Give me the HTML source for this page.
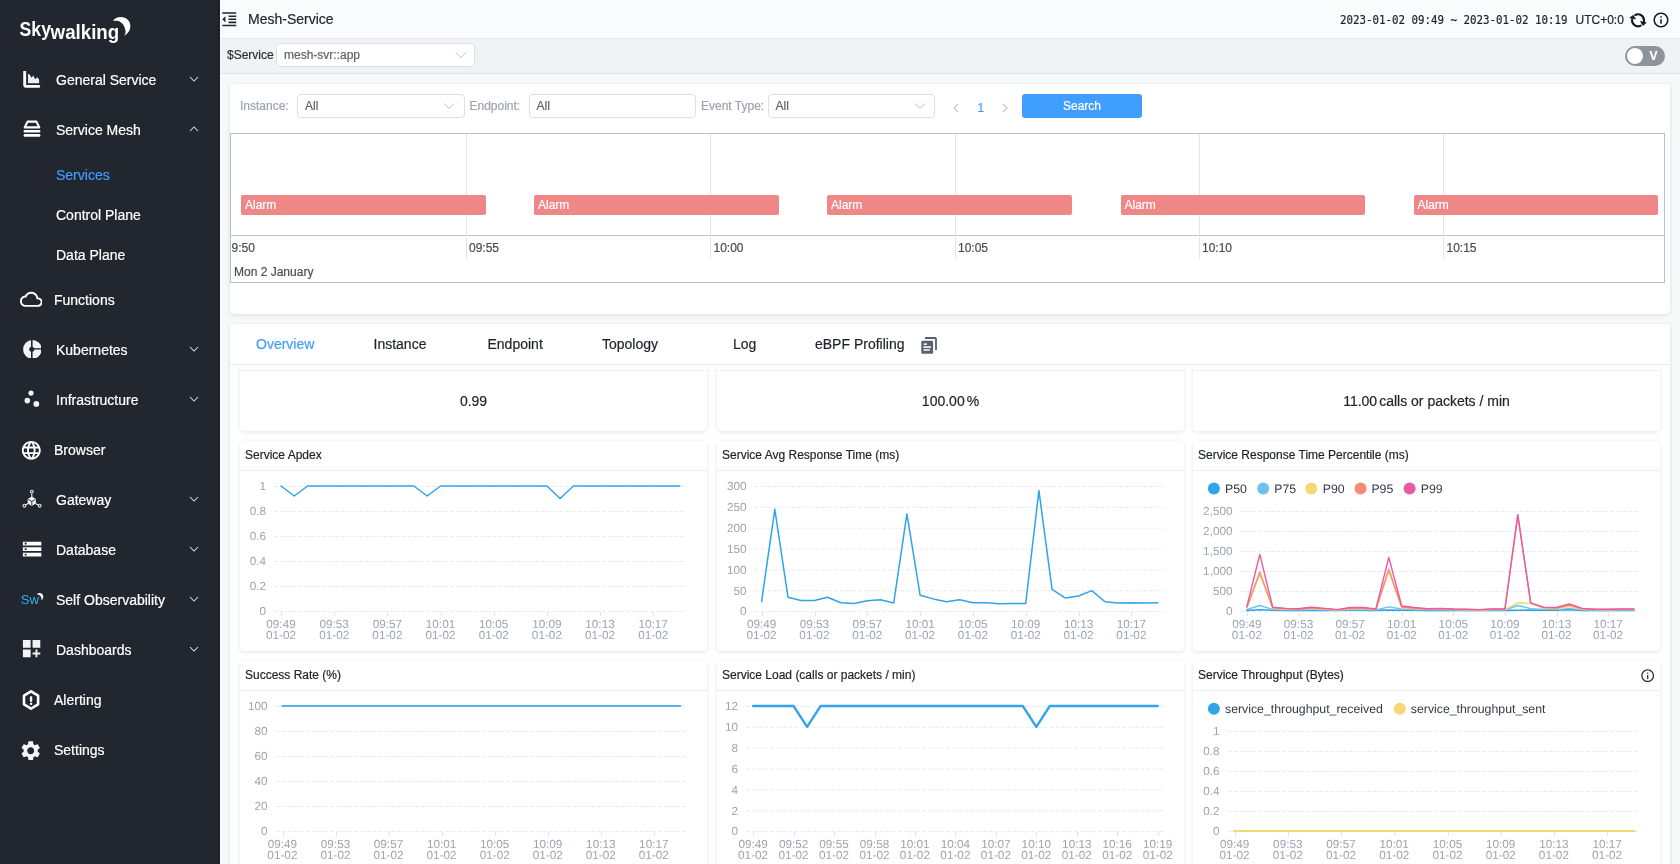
<!DOCTYPE html>
<html lang="en"><head><meta charset="utf-8"><title>Mesh-Service - SkyWalking</title>
<style>
*{box-sizing:border-box;margin:0;padding:0}
html,body{width:1680px;height:864px;overflow:hidden;background:#f7f8fa;
  font-family:"Liberation Sans",sans-serif;font-size:12px;color:#3d444f;
  -webkit-font-smoothing:antialiased;-webkit-text-stroke:0.2px}
.abs{position:absolute}
#app{position:relative;width:1680px;height:864px;overflow:hidden;will-change:transform}
#side{position:absolute;left:0;top:0;width:220px;height:864px;background:#22262e;color:#fff;
  }
#side:after{content:'';position:absolute;left:217.8px;top:0;width:1.6px;height:864px;background:repeating-linear-gradient(to bottom,transparent 0,transparent 1.2px,#11141a 1.2px,#11141a 2.8px,transparent 2.8px,transparent 4px)}
.mi{position:absolute;left:0;width:220px;height:50px;line-height:50px;font-size:14px;color:#fff;white-space:nowrap}
.mi .t{position:absolute;left:56px;top:0}
.mi.nt .t{left:54px}
.mi svg.ic{position:absolute;left:23px;top:16px;width:18px;height:18px;fill:#fff}
.mi svg.ch{position:absolute;left:189px;top:21px;width:10px;height:8px;fill:none;stroke:#e6e8ec;stroke-width:1.1}
.sub{position:absolute;left:56px;height:40px;line-height:40px;font-size:14px;color:#fff;white-space:nowrap}
.sub.on{color:#409eff}
#hdr{position:absolute;left:220px;top:0;width:1460px;height:39px;background:#fafbfc;border-bottom:1px solid #e8eaed}
#tool{position:absolute;left:220px;top:39px;width:1460px;height:35px;background:#f1f2f4;border-bottom:1px solid #dfe8ef}
.sel{position:absolute;background:#fff;border:1px solid #dcdfe6;border-radius:4px;font-size:12px;color:#606266;white-space:nowrap}
.sel .v{position:absolute;left:7px;top:0}
.sel svg{position:absolute;fill:none;stroke:#b4b8bf;stroke-width:1.1}
.lbl{position:absolute;font-size:12px;color:#9ca3af;white-space:nowrap}
.card{position:absolute;background:#fff;border-radius:4px;box-shadow:0 1px 4px 0 rgba(0,0,0,.11)}
.ttl{position:absolute;left:5px;top:0;height:29px;line-height:28px;font-size:12px;color:#1f2329;white-space:nowrap}
.tline{position:absolute;left:0;right:0;top:29px;height:1px;background:#eceef0}
.tab{position:absolute;top:0;height:41px;line-height:41px;font-size:14px;color:#1f2329;white-space:nowrap}
.tab.on{color:#409eff}
.alarm{position:absolute;top:195px;height:20px;width:244.5px;background:#f08787;border-radius:2px;color:#fff;font-size:12px;line-height:20px;padding-left:4px}
.vt{position:absolute;font-size:12px;color:#4d4d4d;white-space:nowrap;line-height:14px}
svg text{font-family:"Liberation Sans",sans-serif}
</style></head>
<body><div id="app">
<div id="side">
<svg class="abs" style="left:0;top:0" width="220" height="60" viewBox="0 0 220 60"><text x="19.6" y="36.3" font-size="19.6" font-weight="bold" fill="#fff" textLength="31.4" lengthAdjust="spacingAndGlyphs">Sky</text><text x="50.6" y="38.6" font-size="19.8" font-weight="bold" fill="#fff" textLength="68.6" lengthAdjust="spacingAndGlyphs">walking</text><path d="M112.9 20.4 C115 18 118 16.9 120.7 16.9 C126.5 16.9 130.4 21 130.4 25.8 C130.4 30.5 127.8 34 124.2 35.7 C125.6 33.8 125.8 31.6 125.3 29.7 C124.6 27 123.8 25 122.2 23.5 C120.6 22 118.8 21 116.8 20.8 C115.4 20.6 114 20.5 112.9 20.4 Z" fill="#fff"/></svg>
<svg class="abs" style="left:23px;top:70.5px" width="18" height="17.5" viewBox="0 0 18 17.5" ><path d="M1.7 0.8 V13.7 Q1.7 15.4 3.4 15.4 H15.8" fill="none" stroke="#fff" stroke-width="2.9" stroke-linecap="round"/><path d="M5 12.2 V3 L6.4 3.2 L8.6 6.8 L10.2 4.6 L12.2 8.2 L14.2 6.2 L16.1 8.6 V12.2 Z" fill="#eceef2"/></svg><div class="abs" style="left:56px;top:55px;height:50px;line-height:50px;font-size:14px;color:#fff;white-space:nowrap">General Service</div><svg class="abs" style="left:189px;top:75.1px" width="10" height="8" viewBox="0 0 10 8" fill="none" stroke="#dcdfe4" stroke-width="1.05"><path d="M1 2 L5 6 L9 2"/></svg>
<svg class="abs" style="left:23px;top:120.0px" width="18" height="17.5" viewBox="0 0 18 17.5" ><path d="M4.6 1.6 H13.4 L16.3 7.4 H1.7 Z" fill="none" stroke="#fff" stroke-width="2.1" stroke-linejoin="round"/><rect x="0.6" y="10" width="16.8" height="2.5" rx="1.2" fill="#fff"/><rect x="0.6" y="14.1" width="16.8" height="2.6" rx="1.2" fill="#fff"/></svg><div class="abs" style="left:56px;top:105px;height:50px;line-height:50px;font-size:14px;color:#fff;white-space:nowrap">Service Mesh</div><svg class="abs" style="left:189px;top:125.1px" width="10" height="8" viewBox="0 0 10 8" fill="none" stroke="#dcdfe4" stroke-width="1.05"><path d="M1 6 L5 2 L9 6"/></svg>
<div class="sub on" style="top:155px">Services</div>
<div class="sub" style="top:195px">Control Plane</div>
<div class="sub" style="top:235px">Data Plane</div>
<svg class="abs" style="left:19.8px;top:288.1px" width="22.6" height="22.6" viewBox="0 0 24 24" ><path d="M19.35 10.04C18.67 6.59 15.64 4 12 4 9.11 4 6.6 5.64 5.35 8.04 2.34 8.36 0 10.91 0 14c0 3.31 2.69 6 6 6h13c2.76 0 5-2.24 5-5 0-2.64-2.05-4.78-4.65-4.96zM19 18H6c-2.21 0-4-1.79-4-4s1.79-4 4-4h.71C7.37 7.69 9.48 6 12 6c3.04 0 5.5 2.46 5.5 5.5v.5H19c1.66 0 3 1.34 3 3s-1.34 3-3 3z" fill="#fff"/></svg><div class="abs" style="left:54px;top:275px;height:50px;line-height:50px;font-size:14px;color:#fff;white-space:nowrap">Functions</div>
<svg class="abs" style="left:22.5px;top:339.6px" width="18.8" height="18.8" viewBox="0 0 18.8 18.8" ><circle cx="9.4" cy="9.4" r="9.3" fill="#f3f4f6"/><rect x="8.0" y="0" width="1.6" height="18.8" fill="#22262e"/><rect x="9.4" y="8.2" width="9.6" height="1.35" fill="#22262e"/><circle cx="8.75" cy="9.2" r="2.5" fill="#22262e"/></svg><div class="abs" style="left:56px;top:325px;height:50px;line-height:50px;font-size:14px;color:#fff;white-space:nowrap">Kubernetes</div><svg class="abs" style="left:189px;top:345.1px" width="10" height="8" viewBox="0 0 10 8" fill="none" stroke="#dcdfe4" stroke-width="1.05"><path d="M1 2 L5 6 L9 2"/></svg>
<svg class="abs" style="left:22px;top:388px" width="20" height="20" viewBox="0 0 20 20" ><circle cx="9" cy="5.1" r="2.6" fill="#f2f3f5"/><circle cx="5.3" cy="12.6" r="2.8" fill="#f2f3f5"/><circle cx="14.3" cy="15.9" r="2.9" fill="#f2f3f5"/></svg><div class="abs" style="left:56px;top:375px;height:50px;line-height:50px;font-size:14px;color:#fff;white-space:nowrap">Infrastructure</div><svg class="abs" style="left:189px;top:395.1px" width="10" height="8" viewBox="0 0 10 8" fill="none" stroke="#dcdfe4" stroke-width="1.05"><path d="M1 2 L5 6 L9 2"/></svg>
<svg class="abs" style="left:19.7px;top:438.8px" width="22.6" height="22.6" viewBox="0 0 24 24" ><path d="M11.99 2C6.47 2 2 6.48 2 12s4.47 10 9.99 10C17.52 22 22 17.52 22 12S17.52 2 11.99 2zm6.93 6h-2.95c-.32-1.25-.78-2.45-1.38-3.56 1.84.63 3.37 1.91 4.33 3.56zM12 4.04c.83 1.2 1.48 2.53 1.91 3.96h-3.82c.43-1.43 1.08-2.76 1.91-3.96zM4.26 14C4.1 13.36 4 12.69 4 12s.1-1.36.26-2h3.38c-.08.66-.14 1.32-.14 2 0 .68.06 1.34.14 2H4.26zm.82 2h2.95c.32 1.25.78 2.45 1.38 3.56-1.84-.63-3.37-1.9-4.33-3.56zm2.95-8H5.08c.96-1.66 2.49-2.93 4.33-3.56C8.81 5.55 8.35 6.75 8.03 8zM12 19.96c-.83-1.2-1.48-2.53-1.91-3.96h3.82c-.43 1.43-1.08 2.76-1.91 3.96zM14.34 14H9.66c-.09-.66-.16-1.32-.16-2 0-.68.07-1.35.16-2h4.68c.09.65.16 1.32.16 2 0 .68-.07 1.34-.16 2zm.25 5.56c.6-1.11 1.06-2.31 1.38-3.56h2.95c-.96 1.65-2.49 2.93-4.33 3.56zM16.36 14c.08-.66.14-1.32.14-2 0-.68-.06-1.34-.14-2h3.38c.16.64.26 1.31.26 2s-.1 1.36-.26 2h-3.38z" fill="#fff"/></svg><div class="abs" style="left:54px;top:425px;height:50px;line-height:50px;font-size:14px;color:#fff;white-space:nowrap">Browser</div>
<svg class="abs" style="left:21px;top:488px" width="22" height="22" viewBox="0 0 22 22" ><g stroke="#e8eaee" stroke-width="1.1" fill="none"><path d="M10.8 5.2 V9 M7 15.6 L4.6 17 M14.6 15.6 L17.4 17.2"/><circle cx="10.8" cy="3.6" r="1.4"/><circle cx="3.4" cy="17.7" r="1.4"/><circle cx="18.7" cy="17.7" r="1.4"/></g><path d="M10.8 8.6 L14.9 11 V15.6 L10.8 18 L6.7 15.6 V11 Z" fill="#f0f1f4"/><path d="M7.3 11.5 L10.8 13.5 L14.3 11.5 M10.8 13.5 V17.5" stroke="#22262e" stroke-width="0.9" fill="none"/></svg><div class="abs" style="left:56px;top:475px;height:50px;line-height:50px;font-size:14px;color:#fff;white-space:nowrap">Gateway</div><svg class="abs" style="left:189px;top:495.1px" width="10" height="8" viewBox="0 0 10 8" fill="none" stroke="#dcdfe4" stroke-width="1.05"><path d="M1 2 L5 6 L9 2"/></svg>
<svg class="abs" style="left:21.1px;top:537.9px" width="22.2" height="22.2" viewBox="0 0 24 24" ><path d="M2 20h20v-4H2v4zm2-3h2v2H4v-2zM2 4v4h20V4H2zm4 3H4V5h2v2zm-4 7h20v-4H2v4zm2-3h2v2H4v-2z" fill="#fff"/></svg><div class="abs" style="left:56px;top:525px;height:50px;line-height:50px;font-size:14px;color:#fff;white-space:nowrap">Database</div><svg class="abs" style="left:189px;top:545.1px" width="10" height="8" viewBox="0 0 10 8" fill="none" stroke="#dcdfe4" stroke-width="1.05"><path d="M1 2 L5 6 L9 2"/></svg>
<svg class="abs" style="left:19px;top:588px" width="28" height="22" viewBox="0 0 28 22" ><text x="1.7" y="16.3" font-size="13.2" fill="#35adef" textLength="18.4" lengthAdjust="spacingAndGlyphs">Sw</text><path d="M17.6 6.3 C19.4 4.6 22 4.6 23.4 6.2 C24.9 8 24.5 11 22.2 12.6 C22.8 10.8 22.4 9.2 21.3 8 C20.3 7 19.1 6.4 17.6 6.3 Z" fill="#f4f5f7"/></svg><div class="abs" style="left:56px;top:575px;height:50px;line-height:50px;font-size:14px;color:#fff;white-space:nowrap">Self Observability</div><svg class="abs" style="left:189px;top:595.1px" width="10" height="8" viewBox="0 0 10 8" fill="none" stroke="#dcdfe4" stroke-width="1.05"><path d="M1 2 L5 6 L9 2"/></svg>
<svg class="abs" style="left:20.4px;top:637.2px" width="23.2" height="23.2" viewBox="0 0 24 24" ><path d="M3 3h8v8H3zm10 0h8v8h-8zM3 13h8v8H3zm15 0h-2v3h-3v2h3v3h2v-3h3v-2h-3z" fill="#f2f3f5"/></svg><div class="abs" style="left:56px;top:625px;height:50px;line-height:50px;font-size:14px;color:#fff;white-space:nowrap">Dashboards</div><svg class="abs" style="left:189px;top:645.1px" width="10" height="8" viewBox="0 0 10 8" fill="none" stroke="#dcdfe4" stroke-width="1.05"><path d="M1 2 L5 6 L9 2"/></svg>
<svg class="abs" style="left:21px;top:689px" width="21" height="22" viewBox="0 0 21 22" ><path d="M10.05 2.3 L17.1 6.6 V15.3 L10.05 19.6 L3 15.3 V6.6 Z" fill="none" stroke="#fff" stroke-width="2.6" stroke-linejoin="round"/><rect x="8.85" y="7.3" width="2.4" height="5.6" rx="0.8" fill="#fff"/><rect x="8.85" y="13.8" width="2.4" height="2.1" rx="0.8" fill="#fff"/></svg><div class="abs" style="left:54px;top:675px;height:50px;line-height:50px;font-size:14px;color:#fff;white-space:nowrap">Alerting</div>
<svg class="abs" style="left:19.2px;top:738.7px" width="23.4" height="23.4" viewBox="0 0 24 24" ><path d="M19.14 12.94c.04-.3.06-.61.06-.94 0-.32-.02-.64-.07-.94l2.03-1.58c.18-.14.23-.41.12-.61l-1.92-3.32c-.12-.22-.37-.29-.59-.22l-2.39.96c-.5-.38-1.03-.7-1.62-.94l-.36-2.54c-.04-.24-.24-.41-.48-.41h-3.84c-.24 0-.43.17-.47.41l-.36 2.54c-.59.24-1.13.57-1.62.94l-2.39-.96c-.22-.08-.47 0-.59.22L2.74 8.87c-.12.21-.08.47.12.61l2.03 1.58c-.05.3-.09.63-.09.94s.02.64.07.94l-2.03 1.58c-.18.14-.23.41-.12.61l1.92 3.32c.12.22.37.29.59.22l2.39-.96c.5.38 1.03.7 1.62.94l.36 2.54c.05.24.24.41.48.41h3.84c.24 0 .44-.17.47-.41l.36-2.54c.59-.24 1.13-.56 1.62-.94l2.39.96c.22.08.47 0 .59-.22l1.92-3.32c.12-.22.07-.47-.12-.61l-2.01-1.58zM12 15.6c-1.98 0-3.6-1.62-3.6-3.6s1.62-3.6 3.6-3.6 3.6 1.62 3.6 3.6-1.62 3.6-3.6 3.6z" fill="#f4f5f7"/></svg><div class="abs" style="left:54px;top:725px;height:50px;line-height:50px;font-size:14px;color:#fff;white-space:nowrap">Settings</div>
</div>
<div id="hdr"></div>
<svg class="abs" style="left:219.7px;top:9.7px" width="18.6" height="18.6" viewBox="0 0 24 24"><path d="M11 17h10v-2H11v2zm-8-5l4 4V8l-4 4zm0 9h18v-2H3v2zM3 3v2h18V3H3zm8 6h10V7H11v2zm0 4h10v-2H11v2z" fill="#23262b"/></svg>
<div class="abs" style="left:248px;top:0;height:38px;line-height:38px;font-size:14px;color:#22262c;white-space:nowrap">Mesh-Service</div>
<div class="abs" style="left:1339.8px;top:0.5px;height:38px;line-height:38.4px;font-size:12.6px;color:#1d2127;white-space:pre;transform:scaleX(0.857);transform-origin:0 0;font-family:'DejaVu Sans Mono','Liberation Mono',monospace">2023-01-02 09:49 ~ 2023-01-02 10:19</div>
<div class="abs" style="left:1575.5px;top:0.5px;height:38px;line-height:39px;font-size:12px;color:#22262c;white-space:nowrap">UTC+0:0</div>
<svg class="abs" style="left:1628px;top:10px" width="20" height="20" viewBox="0 0 20 20"><path d="M7.28 4.95 A6.0 6.0 0 0 1 15.94 11.14 M12.72 15.65 A6.0 6.0 0 0 1 4.06 9.46" fill="none" stroke="#15181c" stroke-width="2.1" stroke-linecap="round"/><path d="M12.6 11.6 L18.2 12.6 L15 15.4 Z M1.8 7.8 L5.2 5.4 L7.4 8.9 Z" fill="#15181c" stroke="#15181c" stroke-width="0.8" stroke-linejoin="round"/></svg>
<svg class="abs" style="left:1651.8px;top:11.4px" width="18" height="18" viewBox="0 0 24 24"><path d="M11 17h2v-6h-2v6zm1-15C6.48 2 2 6.48 2 12s4.48 10 10 10 10-4.48 10-10S17.52 2 12 2zm0 18c-4.41 0-8-3.59-8-8s3.59-8 8-8 8 3.59 8 8-3.59 8-8 8zM11 9h2V7h-2v2z" fill="#15181c"/></svg>
<div id="tool"></div>
<div class="abs" style="left:227px;top:43px;height:24px;line-height:24px;font-size:12px;color:#2b2f36;white-space:nowrap">$Service</div>
<div class="sel" style="left:276px;top:43px;width:199px;height:24px;line-height:22px"><span class="v" style="left:7px">mesh-svr::app</span></div><svg class="abs" style="left:454.5px;top:50.8px" width="12" height="8" viewBox="0 0 12 8" fill="none" stroke="#b7bbc2" stroke-width="1.0"><path d="M1 1.5 L6 6.5 L11 1.5"/></svg>
<div class="abs" style="left:1625px;top:46px;width:40px;height:20px;border-radius:10px;background:#8f939a"></div>
<div class="abs" style="left:1627px;top:48px;width:16px;height:16px;border-radius:8px;background:#fff"></div>
<div class="abs" style="left:1649.5px;top:46px;height:20px;line-height:20px;font-size:12px;font-weight:bold;color:#fff">V</div>
<div class="card" style="left:230px;top:83.6px;width:1440px;height:230px"></div>
<div class="lbl" style="left:240px;top:94px;line-height:24px">Instance:</div>
<div class="sel" style="left:297px;top:94px;width:167.5px;height:24px;line-height:22px"><span class="v" style="left:7px">All</span></div><svg class="abs" style="left:443px;top:101.8px" width="12" height="8" viewBox="0 0 12 8" fill="none" stroke="#b7bbc2" stroke-width="1.0"><path d="M1 1.5 L6 6.5 L11 1.5"/></svg>
<div class="lbl" style="left:469.5px;top:94px;line-height:24px">Endpoint:</div>
<div class="sel" style="left:528.5px;top:94px;width:167px;height:24px;line-height:22px"><span class="v" style="left:7px">All</span></div>
<div class="lbl" style="left:701px;top:94px;line-height:24px">Event Type:</div>
<div class="sel" style="left:767.5px;top:94px;width:167px;height:24px;line-height:22px"><span class="v" style="left:7px">All</span></div><svg class="abs" style="left:914px;top:101.8px" width="12" height="8" viewBox="0 0 12 8" fill="none" stroke="#b7bbc2" stroke-width="1.0"><path d="M1 1.5 L6 6.5 L11 1.5"/></svg>
<svg class="abs" style="left:952px;top:102.5px" width="8" height="10" viewBox="0 0 8 10" fill="none" stroke="#c0c4cc" stroke-width="1.1"><path d="M6 1 L2 5 L6 9"/></svg>
<div class="abs" style="left:977.5px;top:96px;line-height:24px;font-size:12px;color:#409eff">1</div>
<svg class="abs" style="left:1001px;top:102.5px" width="8" height="10" viewBox="0 0 8 10" fill="none" stroke="#c0c4cc" stroke-width="1.1"><path d="M2 1 L6 5 L2 9"/></svg>
<div class="abs" style="left:1022px;top:94px;width:120px;height:24px;border-radius:3px;background:#409eff;color:#fff;font-size:12px;line-height:24px;text-align:center">Search</div>
<div class="abs" style="left:230px;top:133px;width:1435px;height:150px;border:1px solid #bfbfbf;background:#fff"></div>
<div class="abs" style="left:231px;top:235px;width:1433px;height:1px;background:#bfbfbf"></div>
<div class="abs" style="left:466px;top:134px;width:1px;height:125px;background:#e5e5e5"></div>
<div class="abs" style="left:710px;top:134px;width:1px;height:125px;background:#e5e5e5"></div>
<div class="abs" style="left:955px;top:134px;width:1px;height:125px;background:#e5e5e5"></div>
<div class="abs" style="left:1199px;top:134px;width:1px;height:125px;background:#e5e5e5"></div>
<div class="abs" style="left:1443px;top:134px;width:1px;height:125px;background:#e5e5e5"></div>
<div class="alarm" style="left:241px">Alarm</div>
<div class="alarm" style="left:534px">Alarm</div>
<div class="alarm" style="left:827px">Alarm</div>
<div class="alarm" style="left:1120.5px">Alarm</div>
<div class="alarm" style="left:1413.5px">Alarm</div>
<div class="vt" style="left:231.5px;top:241px">9:50</div>
<div class="vt" style="left:469px;top:241px">09:55</div>
<div class="vt" style="left:713.5px;top:241px">10:00</div>
<div class="vt" style="left:958px;top:241px">10:05</div>
<div class="vt" style="left:1202px;top:241px">10:10</div>
<div class="vt" style="left:1446.5px;top:241px">10:15</div>
<div class="vt" style="left:234px;top:265px">Mon 2 January</div>
<div class="card" style="left:230px;top:324px;width:1440px;height:560px"></div>
<div class="tab on" style="left:256px;top:324px">Overview</div>
<div class="tab" style="left:373.5px;top:324px">Instance</div>
<div class="tab" style="left:487.5px;top:324px">Endpoint</div>
<div class="tab" style="left:602px;top:324px">Topology</div>
<div class="tab" style="left:733px;top:324px">Log</div>
<div class="tab" style="left:815px;top:324px">eBPF Profiling</div>
<svg class="abs" style="left:920px;top:336px" width="18" height="19" viewBox="0 0 18 19"><path d="M5.6 2 H15.2 Q16 2 16 2.8 V13.4" fill="none" stroke="#5a606b" stroke-width="1.8" stroke-linecap="round"/><rect x="1.3" y="4.8" width="11.8" height="13" rx="1.3" fill="#5a606b"/><rect x="3.6" y="7.4" width="3.4" height="1.5" fill="#fff"/><rect x="3.4" y="10.3" width="7.6" height="1.6" fill="#fff"/><rect x="3.4" y="13.2" width="6.6" height="1.5" rx="0.7" fill="#fff"/></svg>
<div class="abs" style="left:230px;top:364px;width:1440px;height:1px;background:#eaecef"></div>
<div class="card" style="left:240px;top:366px;width:467px;height:65px;border-top-left-radius:0;border-top-right-radius:0;box-shadow:0 1px 4px 0 rgba(0,0,0,.11);clip-path:inset(0 -6px -6px -6px)"></div>
<div class="abs" style="left:240px;top:370px;width:467px;height:61px;border-top:1px solid #eef0f2;line-height:61px;text-align:center;font-size:14px;color:#1f2329;white-space:nowrap">0.99</div>
<div class="card" style="left:717px;top:366px;width:467px;height:65px;border-top-left-radius:0;border-top-right-radius:0;box-shadow:0 1px 4px 0 rgba(0,0,0,.11);clip-path:inset(0 -6px -6px -6px)"></div>
<div class="abs" style="left:717px;top:370px;width:467px;height:61px;border-top:1px solid #eef0f2;line-height:61px;text-align:center;font-size:14px;color:#1f2329;white-space:nowrap">100.00<span style="margin-left:2px">%</span></div>
<div class="card" style="left:1193px;top:366px;width:467px;height:65px;border-top-left-radius:0;border-top-right-radius:0;box-shadow:0 1px 4px 0 rgba(0,0,0,.11);clip-path:inset(0 -6px -6px -6px)"></div>
<div class="abs" style="left:1193px;top:370px;width:467px;height:61px;border-top:1px solid #eef0f2;line-height:61px;text-align:center;font-size:14px;color:#1f2329;white-space:nowrap">11.00<span style="margin-left:2px">calls or packets / min</span></div>
<div class="card" style="left:240px;top:441px;width:467px;height:210px"><div class="ttl">Service Apdex</div><div class="tline"></div>
<svg class="abs" style="left:0;top:0" width="467" height="210" viewBox="240 441 467 210" font-size="11.75" text-rendering="geometricPrecision">
<line x1="274" x2="686" y1="486.5" y2="486.5" stroke="#e8ebef" stroke-width="1" stroke-dasharray="4 2.07"/>
<text x="266" y="490.3" text-anchor="end" fill="#9da5b2">1</text>
<line x1="274" x2="686" y1="511.5" y2="511.5" stroke="#e8ebef" stroke-width="1" stroke-dasharray="4 2.07"/>
<text x="266" y="515.3" text-anchor="end" fill="#9da5b2">0.8</text>
<line x1="274" x2="686" y1="536.5" y2="536.5" stroke="#e8ebef" stroke-width="1" stroke-dasharray="4 2.07"/>
<text x="266" y="540.3" text-anchor="end" fill="#9da5b2">0.6</text>
<line x1="274" x2="686" y1="561.5" y2="561.5" stroke="#e8ebef" stroke-width="1" stroke-dasharray="4 2.07"/>
<text x="266" y="565.3" text-anchor="end" fill="#9da5b2">0.4</text>
<line x1="274" x2="686" y1="586.5" y2="586.5" stroke="#e8ebef" stroke-width="1" stroke-dasharray="4 2.07"/>
<text x="266" y="590.3" text-anchor="end" fill="#9da5b2">0.2</text>
<line x1="274" x2="686" y1="611.5" y2="611.5" stroke="#e8ebef" stroke-width="1" stroke-dasharray="4 2.07"/>
<text x="266" y="615.3" text-anchor="end" fill="#9da5b2">0</text>
<line x1="281.6" x2="281.6" y1="611.5" y2="616" stroke="#e1e4e9" stroke-width="1" shape-rendering="crispEdges"/>
<text x="281" y="628.45" text-anchor="middle" fill="#9da5b2">09:49</text>
<text x="281" y="639.45" text-anchor="middle" fill="#9da5b2">01-02</text>
<line x1="334.8" x2="334.8" y1="611.5" y2="616" stroke="#e1e4e9" stroke-width="1" shape-rendering="crispEdges"/>
<text x="334.2" y="628.45" text-anchor="middle" fill="#9da5b2">09:53</text>
<text x="334.2" y="639.45" text-anchor="middle" fill="#9da5b2">01-02</text>
<line x1="387.9" x2="387.9" y1="611.5" y2="616" stroke="#e1e4e9" stroke-width="1" shape-rendering="crispEdges"/>
<text x="387.4" y="628.45" text-anchor="middle" fill="#9da5b2">09:57</text>
<text x="387.4" y="639.45" text-anchor="middle" fill="#9da5b2">01-02</text>
<line x1="441.1" x2="441.1" y1="611.5" y2="616" stroke="#e1e4e9" stroke-width="1" shape-rendering="crispEdges"/>
<text x="440.5" y="628.45" text-anchor="middle" fill="#9da5b2">10:01</text>
<text x="440.5" y="639.45" text-anchor="middle" fill="#9da5b2">01-02</text>
<line x1="494.2" x2="494.2" y1="611.5" y2="616" stroke="#e1e4e9" stroke-width="1" shape-rendering="crispEdges"/>
<text x="493.7" y="628.45" text-anchor="middle" fill="#9da5b2">10:05</text>
<text x="493.7" y="639.45" text-anchor="middle" fill="#9da5b2">01-02</text>
<line x1="547.4" x2="547.4" y1="611.5" y2="616" stroke="#e1e4e9" stroke-width="1" shape-rendering="crispEdges"/>
<text x="546.9" y="628.45" text-anchor="middle" fill="#9da5b2">10:09</text>
<text x="546.9" y="639.45" text-anchor="middle" fill="#9da5b2">01-02</text>
<line x1="600.6" x2="600.6" y1="611.5" y2="616" stroke="#e1e4e9" stroke-width="1" shape-rendering="crispEdges"/>
<text x="600" y="628.45" text-anchor="middle" fill="#9da5b2">10:13</text>
<text x="600" y="639.45" text-anchor="middle" fill="#9da5b2">01-02</text>
<line x1="653.7" x2="653.7" y1="611.5" y2="616" stroke="#e1e4e9" stroke-width="1" shape-rendering="crispEdges"/>
<text x="653.2" y="628.45" text-anchor="middle" fill="#9da5b2">10:17</text>
<text x="653.2" y="639.45" text-anchor="middle" fill="#9da5b2">01-02</text>
<polyline points="281,486 294.3,496 307.6,486 320.9,486 334.2,486 347.5,486 360.8,486 374.1,486 387.4,486 400.7,486 413.9,486 427.2,496 440.5,486 453.8,486 467.1,486 480.4,486 493.7,486 507,486 520.3,486 533.6,486 546.9,486 560.1,498.5 573.4,486 586.7,486 600,486 613.3,486 626.6,486 639.9,486 653.2,486 666.5,486 679.8,486" fill="none" stroke="#30a4eb" stroke-width="1.5" stroke-linejoin="round" stroke-linecap="round"/>
</svg></div>
<div class="card" style="left:717px;top:441px;width:467px;height:210px"><div class="ttl">Service Avg Response Time (ms)</div><div class="tline"></div>
<svg class="abs" style="left:0;top:0" width="467" height="210" viewBox="717 441 467 210" font-size="11.75" text-rendering="geometricPrecision">
<line x1="754.6" x2="1164" y1="486.5" y2="486.5" stroke="#e8ebef" stroke-width="1" stroke-dasharray="4 2.07"/>
<text x="746.5" y="490.3" text-anchor="end" fill="#9da5b2">300</text>
<line x1="754.6" x2="1164" y1="507.3" y2="507.3" stroke="#e8ebef" stroke-width="1" stroke-dasharray="4 2.07"/>
<text x="746.5" y="511.1" text-anchor="end" fill="#9da5b2">250</text>
<line x1="754.6" x2="1164" y1="528.2" y2="528.2" stroke="#e8ebef" stroke-width="1" stroke-dasharray="4 2.07"/>
<text x="746.5" y="532" text-anchor="end" fill="#9da5b2">200</text>
<line x1="754.6" x2="1164" y1="549" y2="549" stroke="#e8ebef" stroke-width="1" stroke-dasharray="4 2.07"/>
<text x="746.5" y="552.8" text-anchor="end" fill="#9da5b2">150</text>
<line x1="754.6" x2="1164" y1="569.8" y2="569.8" stroke="#e8ebef" stroke-width="1" stroke-dasharray="4 2.07"/>
<text x="746.5" y="573.6" text-anchor="end" fill="#9da5b2">100</text>
<line x1="754.6" x2="1164" y1="590.7" y2="590.7" stroke="#e8ebef" stroke-width="1" stroke-dasharray="4 2.07"/>
<text x="746.5" y="594.5" text-anchor="end" fill="#9da5b2">50</text>
<line x1="754.6" x2="1164" y1="611.5" y2="611.5" stroke="#e8ebef" stroke-width="1" stroke-dasharray="4 2.07"/>
<text x="746.5" y="615.3" text-anchor="end" fill="#9da5b2">0</text>
<line x1="762.2" x2="762.2" y1="611.5" y2="616" stroke="#e1e4e9" stroke-width="1" shape-rendering="crispEdges"/>
<text x="761.6" y="628.45" text-anchor="middle" fill="#9da5b2">09:49</text>
<text x="761.6" y="639.45" text-anchor="middle" fill="#9da5b2">01-02</text>
<line x1="815" x2="815" y1="611.5" y2="616" stroke="#e1e4e9" stroke-width="1" shape-rendering="crispEdges"/>
<text x="814.4" y="628.45" text-anchor="middle" fill="#9da5b2">09:53</text>
<text x="814.4" y="639.45" text-anchor="middle" fill="#9da5b2">01-02</text>
<line x1="867.8" x2="867.8" y1="611.5" y2="616" stroke="#e1e4e9" stroke-width="1" shape-rendering="crispEdges"/>
<text x="867.3" y="628.45" text-anchor="middle" fill="#9da5b2">09:57</text>
<text x="867.3" y="639.45" text-anchor="middle" fill="#9da5b2">01-02</text>
<line x1="920.6" x2="920.6" y1="611.5" y2="616" stroke="#e1e4e9" stroke-width="1" shape-rendering="crispEdges"/>
<text x="920.1" y="628.45" text-anchor="middle" fill="#9da5b2">10:01</text>
<text x="920.1" y="639.45" text-anchor="middle" fill="#9da5b2">01-02</text>
<line x1="973.5" x2="973.5" y1="611.5" y2="616" stroke="#e1e4e9" stroke-width="1" shape-rendering="crispEdges"/>
<text x="972.9" y="628.45" text-anchor="middle" fill="#9da5b2">10:05</text>
<text x="972.9" y="639.45" text-anchor="middle" fill="#9da5b2">01-02</text>
<line x1="1026.3" x2="1026.3" y1="611.5" y2="616" stroke="#e1e4e9" stroke-width="1" shape-rendering="crispEdges"/>
<text x="1025.7" y="628.45" text-anchor="middle" fill="#9da5b2">10:09</text>
<text x="1025.7" y="639.45" text-anchor="middle" fill="#9da5b2">01-02</text>
<line x1="1079.1" x2="1079.1" y1="611.5" y2="616" stroke="#e1e4e9" stroke-width="1" shape-rendering="crispEdges"/>
<text x="1078.6" y="628.45" text-anchor="middle" fill="#9da5b2">10:13</text>
<text x="1078.6" y="639.45" text-anchor="middle" fill="#9da5b2">01-02</text>
<line x1="1131.9" x2="1131.9" y1="611.5" y2="616" stroke="#e1e4e9" stroke-width="1" shape-rendering="crispEdges"/>
<text x="1131.4" y="628.45" text-anchor="middle" fill="#9da5b2">10:17</text>
<text x="1131.4" y="639.45" text-anchor="middle" fill="#9da5b2">01-02</text>
<polyline points="761.6,601.4 774.8,509.3 788,597.2 801.2,600.6 814.4,600.6 827.6,597.2 840.8,602.8 854,603.5 867.3,600.8 880.5,599.8 893.7,603.1 906.9,513.9 920.1,595.2 933.3,598.9 946.5,601.8 959.7,599.8 972.9,602.8 986.1,602.8 999.3,603.7 1012.5,603.5 1025.7,603.5 1038.9,490.6 1052.1,589.3 1065.4,598.1 1078.6,596 1091.8,590.6 1105,601.8 1118.2,603.1 1131.4,602.7 1144.6,603.1 1157.8,602.7" fill="none" stroke="#30a4eb" stroke-width="1.5" stroke-linejoin="round" stroke-linecap="round"/>
</svg></div>
<div class="card" style="left:1193px;top:441px;width:467px;height:210px"><div class="ttl">Service Response Time Percentile (ms)</div><div class="tline"></div>
<svg class="abs" style="left:0;top:0" width="467" height="210" viewBox="1193 441 467 210" font-size="11.75" text-rendering="geometricPrecision">
<line x1="1240" x2="1640" y1="511.5" y2="511.5" stroke="#e8ebef" stroke-width="1" stroke-dasharray="4 2.07"/>
<text x="1232.5" y="515.3" text-anchor="end" fill="#9da5b2">2,500</text>
<line x1="1240" x2="1640" y1="531.5" y2="531.5" stroke="#e8ebef" stroke-width="1" stroke-dasharray="4 2.07"/>
<text x="1232.5" y="535.3" text-anchor="end" fill="#9da5b2">2,000</text>
<line x1="1240" x2="1640" y1="551.5" y2="551.5" stroke="#e8ebef" stroke-width="1" stroke-dasharray="4 2.07"/>
<text x="1232.5" y="555.3" text-anchor="end" fill="#9da5b2">1,500</text>
<line x1="1240" x2="1640" y1="571.5" y2="571.5" stroke="#e8ebef" stroke-width="1" stroke-dasharray="4 2.07"/>
<text x="1232.5" y="575.3" text-anchor="end" fill="#9da5b2">1,000</text>
<line x1="1240" x2="1640" y1="591.5" y2="591.5" stroke="#e8ebef" stroke-width="1" stroke-dasharray="4 2.07"/>
<text x="1232.5" y="595.3" text-anchor="end" fill="#9da5b2">500</text>
<line x1="1240" x2="1640" y1="611.5" y2="611.5" stroke="#e8ebef" stroke-width="1" stroke-dasharray="4 2.07"/>
<text x="1232.5" y="615.3" text-anchor="end" fill="#9da5b2">0</text>
<line x1="1247.4" x2="1247.4" y1="611.5" y2="616" stroke="#e1e4e9" stroke-width="1" shape-rendering="crispEdges"/>
<text x="1246.9" y="628.45" text-anchor="middle" fill="#9da5b2">09:49</text>
<text x="1246.9" y="639.45" text-anchor="middle" fill="#9da5b2">01-02</text>
<line x1="1299" x2="1299" y1="611.5" y2="616" stroke="#e1e4e9" stroke-width="1" shape-rendering="crispEdges"/>
<text x="1298.5" y="628.45" text-anchor="middle" fill="#9da5b2">09:53</text>
<text x="1298.5" y="639.45" text-anchor="middle" fill="#9da5b2">01-02</text>
<line x1="1350.6" x2="1350.6" y1="611.5" y2="616" stroke="#e1e4e9" stroke-width="1" shape-rendering="crispEdges"/>
<text x="1350.1" y="628.45" text-anchor="middle" fill="#9da5b2">09:57</text>
<text x="1350.1" y="639.45" text-anchor="middle" fill="#9da5b2">01-02</text>
<line x1="1402.2" x2="1402.2" y1="611.5" y2="616" stroke="#e1e4e9" stroke-width="1" shape-rendering="crispEdges"/>
<text x="1401.7" y="628.45" text-anchor="middle" fill="#9da5b2">10:01</text>
<text x="1401.7" y="639.45" text-anchor="middle" fill="#9da5b2">01-02</text>
<line x1="1453.9" x2="1453.9" y1="611.5" y2="616" stroke="#e1e4e9" stroke-width="1" shape-rendering="crispEdges"/>
<text x="1453.3" y="628.45" text-anchor="middle" fill="#9da5b2">10:05</text>
<text x="1453.3" y="639.45" text-anchor="middle" fill="#9da5b2">01-02</text>
<line x1="1505.5" x2="1505.5" y1="611.5" y2="616" stroke="#e1e4e9" stroke-width="1" shape-rendering="crispEdges"/>
<text x="1504.9" y="628.45" text-anchor="middle" fill="#9da5b2">10:09</text>
<text x="1504.9" y="639.45" text-anchor="middle" fill="#9da5b2">01-02</text>
<line x1="1557.1" x2="1557.1" y1="611.5" y2="616" stroke="#e1e4e9" stroke-width="1" shape-rendering="crispEdges"/>
<text x="1556.5" y="628.45" text-anchor="middle" fill="#9da5b2">10:13</text>
<text x="1556.5" y="639.45" text-anchor="middle" fill="#9da5b2">01-02</text>
<line x1="1608.7" x2="1608.7" y1="611.5" y2="616" stroke="#e1e4e9" stroke-width="1" shape-rendering="crispEdges"/>
<text x="1608.1" y="628.45" text-anchor="middle" fill="#9da5b2">10:17</text>
<text x="1608.1" y="639.45" text-anchor="middle" fill="#9da5b2">01-02</text>
<polyline points="1246.9,610.4 1259.8,609.8 1272.7,610.3 1285.6,610.4 1298.5,610.4 1311.4,610.2 1324.3,610.4 1337.2,610.5 1350.1,610.3 1363,610.2 1375.9,610.4 1388.8,610 1401.7,610.2 1414.6,610.3 1427.5,610.4 1440.4,610.4 1453.3,610.4 1466.2,610.5 1479.1,610.5 1492,610.4 1504.9,610.4 1517.8,610.2 1530.7,610 1543.6,610.3 1556.5,610.2 1569.4,609.6 1582.3,610.4 1595.2,610.5 1608.1,610.5 1621,610.4 1633.9,610.4" fill="none" stroke="#30a4eb" stroke-width="1.6" stroke-linejoin="round" stroke-linecap="round"/>
<polyline points="1246.9,609.4 1259.8,605.5 1272.7,609.4 1285.6,609.8 1298.5,609.9 1311.4,609.4 1324.3,609.8 1337.2,610.2 1350.1,609.6 1363,609.4 1375.9,610 1388.8,606.9 1401.7,609 1414.6,609.6 1427.5,609.9 1440.4,609.8 1453.3,610 1466.2,610.1 1479.1,610.2 1492,610 1504.9,610 1517.8,605.5 1530.7,608.6 1543.6,609.4 1556.5,609.4 1569.4,608.6 1582.3,609.8 1595.2,610.1 1608.1,610.1 1621,610 1633.9,610" fill="none" stroke="#6cc1ee" stroke-width="1.4" stroke-linejoin="round" stroke-linecap="round"/>
<polyline points="1246.9,607.8 1259.8,574.3 1272.7,608.6 1285.6,609.2 1298.5,609.4 1311.4,608.6 1324.3,609.2 1337.2,610 1350.1,608.8 1363,608.6 1375.9,609.6 1388.8,571.4 1401.7,607.8 1414.6,608.8 1427.5,609.4 1440.4,609.2 1453.3,609.6 1466.2,609.8 1479.1,610 1492,609.6 1504.9,609.6 1517.8,602.8 1530.7,603.4 1543.6,608.2 1556.5,608.6 1569.4,606.6 1582.3,609.2 1595.2,609.8 1608.1,609.8 1621,609.6 1633.9,609.6" fill="none" stroke="#f5d872" stroke-width="1.4" stroke-linejoin="round" stroke-linecap="round"/>
<polyline points="1246.9,607.2 1259.8,571.9 1272.7,607.8 1285.6,608.8 1298.5,609 1311.4,607.8 1324.3,608.8 1337.2,609.8 1350.1,608.2 1363,608 1375.9,609.2 1388.8,569.3 1401.7,607 1414.6,608.2 1427.5,609 1440.4,608.8 1453.3,609.2 1466.2,609.5 1479.1,609.8 1492,609.2 1504.9,609.2 1517.8,515.2 1530.7,603.2 1543.6,607.6 1556.5,608 1569.4,605 1582.3,608.8 1595.2,609.5 1608.1,609.5 1621,609.2 1633.9,609.2" fill="none" stroke="#f58d74" stroke-width="1.4" stroke-linejoin="round" stroke-linecap="round"/>
<polyline points="1246.9,606.3 1259.8,554.4 1272.7,607.2 1285.6,608.4 1298.5,608.7 1311.4,607.2 1324.3,608.4 1337.2,609.6 1350.1,607.5 1363,607.5 1375.9,609 1388.8,557.4 1401.7,606 1414.6,607.5 1427.5,608.7 1440.4,608.4 1453.3,609 1466.2,609.2 1479.1,609.6 1492,609 1504.9,609 1517.8,514.8 1530.7,602.8 1543.6,607.2 1556.5,607.5 1569.4,604 1582.3,608.4 1595.2,609.2 1608.1,609.2 1621,609 1633.9,609" fill="none" stroke="#e85aa2" stroke-width="1.4" stroke-linejoin="round" stroke-linecap="round"/>
<circle cx="1213.9" cy="488.4" r="6" fill="#30a4eb"/>
<text x="1225" y="492.8" fill="#333a45" font-size="12.3">P50</text>
<circle cx="1263.2" cy="488.4" r="6" fill="#6cc1ee"/>
<text x="1274.3" y="492.8" fill="#333a45" font-size="12.3">P75</text>
<circle cx="1311.3" cy="488.4" r="6" fill="#f5d872"/>
<text x="1322.7" y="492.8" fill="#333a45" font-size="12.3">P90</text>
<circle cx="1360.6" cy="488.4" r="6" fill="#f58d74"/>
<text x="1371.4" y="492.8" fill="#333a45" font-size="12.3">P95</text>
<circle cx="1409.6" cy="488.4" r="6" fill="#e85aa2"/>
<text x="1420.7" y="492.8" fill="#333a45" font-size="12.3">P99</text>
</svg></div>
<div class="card" style="left:240px;top:661px;width:467px;height:230px"><div class="ttl">Success Rate (%)</div><div class="tline"></div>
<svg class="abs" style="left:0;top:0" width="467" height="230" viewBox="240 661 467 230" font-size="11.75" text-rendering="geometricPrecision">
<line x1="275.4" x2="686.6" y1="706.5" y2="706.5" stroke="#e8ebef" stroke-width="1" stroke-dasharray="4 2.07"/>
<text x="267.5" y="710.3" text-anchor="end" fill="#9da5b2">100</text>
<line x1="275.4" x2="686.6" y1="731.5" y2="731.5" stroke="#e8ebef" stroke-width="1" stroke-dasharray="4 2.07"/>
<text x="267.5" y="735.3" text-anchor="end" fill="#9da5b2">80</text>
<line x1="275.4" x2="686.6" y1="756.5" y2="756.5" stroke="#e8ebef" stroke-width="1" stroke-dasharray="4 2.07"/>
<text x="267.5" y="760.3" text-anchor="end" fill="#9da5b2">60</text>
<line x1="275.4" x2="686.6" y1="781.5" y2="781.5" stroke="#e8ebef" stroke-width="1" stroke-dasharray="4 2.07"/>
<text x="267.5" y="785.3" text-anchor="end" fill="#9da5b2">40</text>
<line x1="275.4" x2="686.6" y1="806.5" y2="806.5" stroke="#e8ebef" stroke-width="1" stroke-dasharray="4 2.07"/>
<text x="267.5" y="810.3" text-anchor="end" fill="#9da5b2">20</text>
<line x1="275.4" x2="686.6" y1="831.5" y2="831.5" stroke="#e8ebef" stroke-width="1" stroke-dasharray="4 2.07"/>
<text x="267.5" y="835.3" text-anchor="end" fill="#9da5b2">0</text>
<line x1="283" x2="283" y1="831.5" y2="836" stroke="#e1e4e9" stroke-width="1" shape-rendering="crispEdges"/>
<text x="282.4" y="848.45" text-anchor="middle" fill="#9da5b2">09:49</text>
<text x="282.4" y="859.45" text-anchor="middle" fill="#9da5b2">01-02</text>
<line x1="336" x2="336" y1="831.5" y2="836" stroke="#e1e4e9" stroke-width="1" shape-rendering="crispEdges"/>
<text x="335.5" y="848.45" text-anchor="middle" fill="#9da5b2">09:53</text>
<text x="335.5" y="859.45" text-anchor="middle" fill="#9da5b2">01-02</text>
<line x1="389.1" x2="389.1" y1="831.5" y2="836" stroke="#e1e4e9" stroke-width="1" shape-rendering="crispEdges"/>
<text x="388.5" y="848.45" text-anchor="middle" fill="#9da5b2">09:57</text>
<text x="388.5" y="859.45" text-anchor="middle" fill="#9da5b2">01-02</text>
<line x1="442.2" x2="442.2" y1="831.5" y2="836" stroke="#e1e4e9" stroke-width="1" shape-rendering="crispEdges"/>
<text x="441.6" y="848.45" text-anchor="middle" fill="#9da5b2">10:01</text>
<text x="441.6" y="859.45" text-anchor="middle" fill="#9da5b2">01-02</text>
<line x1="495.2" x2="495.2" y1="831.5" y2="836" stroke="#e1e4e9" stroke-width="1" shape-rendering="crispEdges"/>
<text x="494.7" y="848.45" text-anchor="middle" fill="#9da5b2">10:05</text>
<text x="494.7" y="859.45" text-anchor="middle" fill="#9da5b2">01-02</text>
<line x1="548.3" x2="548.3" y1="831.5" y2="836" stroke="#e1e4e9" stroke-width="1" shape-rendering="crispEdges"/>
<text x="547.7" y="848.45" text-anchor="middle" fill="#9da5b2">10:09</text>
<text x="547.7" y="859.45" text-anchor="middle" fill="#9da5b2">01-02</text>
<line x1="601.3" x2="601.3" y1="831.5" y2="836" stroke="#e1e4e9" stroke-width="1" shape-rendering="crispEdges"/>
<text x="600.8" y="848.45" text-anchor="middle" fill="#9da5b2">10:13</text>
<text x="600.8" y="859.45" text-anchor="middle" fill="#9da5b2">01-02</text>
<line x1="654.4" x2="654.4" y1="831.5" y2="836" stroke="#e1e4e9" stroke-width="1" shape-rendering="crispEdges"/>
<text x="653.8" y="848.45" text-anchor="middle" fill="#9da5b2">10:17</text>
<text x="653.8" y="859.45" text-anchor="middle" fill="#9da5b2">01-02</text>
<polyline points="282.4,706 295.7,706 309,706 322.2,706 335.5,706 348.8,706 362,706 375.3,706 388.5,706 401.8,706 415.1,706 428.3,706 441.6,706 454.9,706 468.1,706 481.4,706 494.7,706 507.9,706 521.2,706 534.5,706 547.7,706 561,706 574.3,706 587.5,706 600.8,706 614,706 627.3,706 640.6,706 653.8,706 667.1,706 680.4,706" fill="none" stroke="#55b4ee" stroke-width="2" stroke-linejoin="round" stroke-linecap="round"/>
</svg></div>
<div class="card" style="left:717px;top:661px;width:467px;height:230px"><div class="ttl">Service Load (calls or packets / min)</div><div class="tline"></div>
<svg class="abs" style="left:0;top:0" width="467" height="230" viewBox="717 661 467 230" font-size="11.75" text-rendering="geometricPrecision">
<line x1="746" x2="1164" y1="706.5" y2="706.5" stroke="#e8ebef" stroke-width="1" stroke-dasharray="4 2.07"/>
<text x="738" y="710.3" text-anchor="end" fill="#9da5b2">12</text>
<line x1="746" x2="1164" y1="727.3" y2="727.3" stroke="#e8ebef" stroke-width="1" stroke-dasharray="4 2.07"/>
<text x="738" y="731.1" text-anchor="end" fill="#9da5b2">10</text>
<line x1="746" x2="1164" y1="748.2" y2="748.2" stroke="#e8ebef" stroke-width="1" stroke-dasharray="4 2.07"/>
<text x="738" y="752" text-anchor="end" fill="#9da5b2">8</text>
<line x1="746" x2="1164" y1="769" y2="769" stroke="#e8ebef" stroke-width="1" stroke-dasharray="4 2.07"/>
<text x="738" y="772.8" text-anchor="end" fill="#9da5b2">6</text>
<line x1="746" x2="1164" y1="789.8" y2="789.8" stroke="#e8ebef" stroke-width="1" stroke-dasharray="4 2.07"/>
<text x="738" y="793.6" text-anchor="end" fill="#9da5b2">4</text>
<line x1="746" x2="1164" y1="810.7" y2="810.7" stroke="#e8ebef" stroke-width="1" stroke-dasharray="4 2.07"/>
<text x="738" y="814.5" text-anchor="end" fill="#9da5b2">2</text>
<line x1="746" x2="1164" y1="831.5" y2="831.5" stroke="#e8ebef" stroke-width="1" stroke-dasharray="4 2.07"/>
<text x="738" y="835.3" text-anchor="end" fill="#9da5b2">0</text>
<line x1="753.7" x2="753.7" y1="831.5" y2="836" stroke="#e1e4e9" stroke-width="1" shape-rendering="crispEdges"/>
<text x="753.1" y="848.45" text-anchor="middle" fill="#9da5b2">09:49</text>
<text x="753.1" y="859.45" text-anchor="middle" fill="#9da5b2">01-02</text>
<line x1="794.1" x2="794.1" y1="831.5" y2="836" stroke="#e1e4e9" stroke-width="1" shape-rendering="crispEdges"/>
<text x="793.6" y="848.45" text-anchor="middle" fill="#9da5b2">09:52</text>
<text x="793.6" y="859.45" text-anchor="middle" fill="#9da5b2">01-02</text>
<line x1="834.6" x2="834.6" y1="831.5" y2="836" stroke="#e1e4e9" stroke-width="1" shape-rendering="crispEdges"/>
<text x="834" y="848.45" text-anchor="middle" fill="#9da5b2">09:55</text>
<text x="834" y="859.45" text-anchor="middle" fill="#9da5b2">01-02</text>
<line x1="875" x2="875" y1="831.5" y2="836" stroke="#e1e4e9" stroke-width="1" shape-rendering="crispEdges"/>
<text x="874.5" y="848.45" text-anchor="middle" fill="#9da5b2">09:58</text>
<text x="874.5" y="859.45" text-anchor="middle" fill="#9da5b2">01-02</text>
<line x1="915.5" x2="915.5" y1="831.5" y2="836" stroke="#e1e4e9" stroke-width="1" shape-rendering="crispEdges"/>
<text x="914.9" y="848.45" text-anchor="middle" fill="#9da5b2">10:01</text>
<text x="914.9" y="859.45" text-anchor="middle" fill="#9da5b2">01-02</text>
<line x1="955.9" x2="955.9" y1="831.5" y2="836" stroke="#e1e4e9" stroke-width="1" shape-rendering="crispEdges"/>
<text x="955.4" y="848.45" text-anchor="middle" fill="#9da5b2">10:04</text>
<text x="955.4" y="859.45" text-anchor="middle" fill="#9da5b2">01-02</text>
<line x1="996.4" x2="996.4" y1="831.5" y2="836" stroke="#e1e4e9" stroke-width="1" shape-rendering="crispEdges"/>
<text x="995.9" y="848.45" text-anchor="middle" fill="#9da5b2">10:07</text>
<text x="995.9" y="859.45" text-anchor="middle" fill="#9da5b2">01-02</text>
<line x1="1036.9" x2="1036.9" y1="831.5" y2="836" stroke="#e1e4e9" stroke-width="1" shape-rendering="crispEdges"/>
<text x="1036.3" y="848.45" text-anchor="middle" fill="#9da5b2">10:10</text>
<text x="1036.3" y="859.45" text-anchor="middle" fill="#9da5b2">01-02</text>
<line x1="1077.3" x2="1077.3" y1="831.5" y2="836" stroke="#e1e4e9" stroke-width="1" shape-rendering="crispEdges"/>
<text x="1076.8" y="848.45" text-anchor="middle" fill="#9da5b2">10:13</text>
<text x="1076.8" y="859.45" text-anchor="middle" fill="#9da5b2">01-02</text>
<line x1="1117.8" x2="1117.8" y1="831.5" y2="836" stroke="#e1e4e9" stroke-width="1" shape-rendering="crispEdges"/>
<text x="1117.2" y="848.45" text-anchor="middle" fill="#9da5b2">10:16</text>
<text x="1117.2" y="859.45" text-anchor="middle" fill="#9da5b2">01-02</text>
<line x1="1158.2" x2="1158.2" y1="831.5" y2="836" stroke="#e1e4e9" stroke-width="1" shape-rendering="crispEdges"/>
<text x="1157.7" y="848.45" text-anchor="middle" fill="#9da5b2">10:19</text>
<text x="1157.7" y="859.45" text-anchor="middle" fill="#9da5b2">01-02</text>
<polyline points="753.1,706 766.6,706 780.1,706 793.6,706 807.1,726.8 820.6,706 834,706 847.5,706 861,706 874.5,706 888,706 901.5,706 914.9,706 928.4,706 941.9,706 955.4,706 968.9,706 982.4,706 995.9,706 1009.3,706 1022.8,706 1036.3,726.8 1049.8,706 1063.3,706 1076.8,706 1090.2,706 1103.7,706 1117.2,706 1130.7,706 1144.2,706 1157.7,706" fill="none" stroke="#30a4eb" stroke-width="2.3" stroke-linejoin="round" stroke-linecap="round"/>
</svg></div>
<div class="card" style="left:1193px;top:661px;width:467px;height:230px"><div class="ttl">Service Throughput (Bytes)</div><div class="tline"></div>
<svg class="abs" style="left:446.5px;top:7.3px" width="15.4" height="15.4" viewBox="0 0 24 24"><path d="M11 17h2v-6h-2v6zm1-15C6.48 2 2 6.48 2 12s4.48 10 10 10 10-4.48 10-10S17.52 2 12 2zm0 18c-4.41 0-8-3.59-8-8s3.59-8 8-8 8 3.59 8 8-3.59 8-8 8zM11 9h2V7h-2v2z" fill="#2a2e35"/></svg>
<svg class="abs" style="left:0;top:0" width="467" height="230" viewBox="1193 661 467 230" font-size="11.75" text-rendering="geometricPrecision">
<line x1="1227.5" x2="1640" y1="731.5" y2="731.5" stroke="#e8ebef" stroke-width="1" stroke-dasharray="4 2.07"/>
<text x="1219.5" y="735.3" text-anchor="end" fill="#9da5b2">1</text>
<line x1="1227.5" x2="1640" y1="751.5" y2="751.5" stroke="#e8ebef" stroke-width="1" stroke-dasharray="4 2.07"/>
<text x="1219.5" y="755.3" text-anchor="end" fill="#9da5b2">0.8</text>
<line x1="1227.5" x2="1640" y1="771.5" y2="771.5" stroke="#e8ebef" stroke-width="1" stroke-dasharray="4 2.07"/>
<text x="1219.5" y="775.3" text-anchor="end" fill="#9da5b2">0.6</text>
<line x1="1227.5" x2="1640" y1="791.5" y2="791.5" stroke="#e8ebef" stroke-width="1" stroke-dasharray="4 2.07"/>
<text x="1219.5" y="795.3" text-anchor="end" fill="#9da5b2">0.4</text>
<line x1="1227.5" x2="1640" y1="811.5" y2="811.5" stroke="#e8ebef" stroke-width="1" stroke-dasharray="4 2.07"/>
<text x="1219.5" y="815.3" text-anchor="end" fill="#9da5b2">0.2</text>
<line x1="1227.5" x2="1640" y1="831.5" y2="831.5" stroke="#e8ebef" stroke-width="1" stroke-dasharray="4 2.07"/>
<text x="1219.5" y="835.3" text-anchor="end" fill="#9da5b2">0</text>
<line x1="1235.1" x2="1235.1" y1="831.5" y2="836" stroke="#e1e4e9" stroke-width="1" shape-rendering="crispEdges"/>
<text x="1234.6" y="848.45" text-anchor="middle" fill="#9da5b2">09:49</text>
<text x="1234.6" y="859.45" text-anchor="middle" fill="#9da5b2">01-02</text>
<line x1="1288.3" x2="1288.3" y1="831.5" y2="836" stroke="#e1e4e9" stroke-width="1" shape-rendering="crispEdges"/>
<text x="1287.8" y="848.45" text-anchor="middle" fill="#9da5b2">09:53</text>
<text x="1287.8" y="859.45" text-anchor="middle" fill="#9da5b2">01-02</text>
<line x1="1341.6" x2="1341.6" y1="831.5" y2="836" stroke="#e1e4e9" stroke-width="1" shape-rendering="crispEdges"/>
<text x="1341" y="848.45" text-anchor="middle" fill="#9da5b2">09:57</text>
<text x="1341" y="859.45" text-anchor="middle" fill="#9da5b2">01-02</text>
<line x1="1394.8" x2="1394.8" y1="831.5" y2="836" stroke="#e1e4e9" stroke-width="1" shape-rendering="crispEdges"/>
<text x="1394.2" y="848.45" text-anchor="middle" fill="#9da5b2">10:01</text>
<text x="1394.2" y="859.45" text-anchor="middle" fill="#9da5b2">01-02</text>
<line x1="1448" x2="1448" y1="831.5" y2="836" stroke="#e1e4e9" stroke-width="1" shape-rendering="crispEdges"/>
<text x="1447.5" y="848.45" text-anchor="middle" fill="#9da5b2">10:05</text>
<text x="1447.5" y="859.45" text-anchor="middle" fill="#9da5b2">01-02</text>
<line x1="1501.2" x2="1501.2" y1="831.5" y2="836" stroke="#e1e4e9" stroke-width="1" shape-rendering="crispEdges"/>
<text x="1500.7" y="848.45" text-anchor="middle" fill="#9da5b2">10:09</text>
<text x="1500.7" y="859.45" text-anchor="middle" fill="#9da5b2">01-02</text>
<line x1="1554.5" x2="1554.5" y1="831.5" y2="836" stroke="#e1e4e9" stroke-width="1" shape-rendering="crispEdges"/>
<text x="1553.9" y="848.45" text-anchor="middle" fill="#9da5b2">10:13</text>
<text x="1553.9" y="859.45" text-anchor="middle" fill="#9da5b2">01-02</text>
<line x1="1607.7" x2="1607.7" y1="831.5" y2="836" stroke="#e1e4e9" stroke-width="1" shape-rendering="crispEdges"/>
<text x="1607.1" y="848.45" text-anchor="middle" fill="#9da5b2">10:17</text>
<text x="1607.1" y="859.45" text-anchor="middle" fill="#9da5b2">01-02</text>
<polyline points="1234.6,831 1247.9,831 1261.2,831 1274.5,831 1287.8,831 1301.1,831 1314.4,831 1327.7,831 1341,831 1354.3,831 1367.6,831 1380.9,831 1394.2,831 1407.5,831 1420.8,831 1434.2,831 1447.5,831 1460.8,831 1474.1,831 1487.4,831 1500.7,831 1514,831 1527.3,831 1540.6,831 1553.9,831 1567.2,831 1580.5,831 1593.8,831 1607.1,831 1620.4,831 1633.7,831" fill="none" stroke="#30a4eb" stroke-width="2" stroke-linejoin="round" stroke-linecap="round"/>
<polyline points="1234.6,831 1247.9,831 1261.2,831 1274.5,831 1287.8,831 1301.1,831 1314.4,831 1327.7,831 1341,831 1354.3,831 1367.6,831 1380.9,831 1394.2,831 1407.5,831 1420.8,831 1434.2,831 1447.5,831 1460.8,831 1474.1,831 1487.4,831 1500.7,831 1514,831 1527.3,831 1540.6,831 1553.9,831 1567.2,831 1580.5,831 1593.8,831 1607.1,831 1620.4,831 1633.7,831" fill="none" stroke="#f5d872" stroke-width="2" stroke-linejoin="round" stroke-linecap="round"/>
<circle cx="1213.9" cy="708.8" r="6" fill="#30a4eb"/>
<text x="1225" y="713.2" fill="#333a45" font-size="12.3">service_throughput_received</text>
<circle cx="1399.7" cy="708.8" r="6" fill="#f5d872"/>
<text x="1410.8" y="713.2" fill="#333a45" font-size="12.3">service_throughput_sent</text>
</svg></div>
</div></body></html>
